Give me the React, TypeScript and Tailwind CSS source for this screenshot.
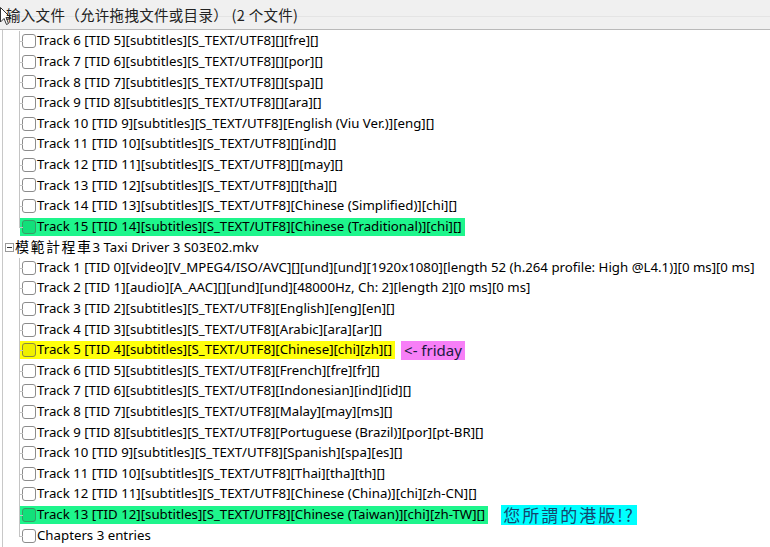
import React from "react";

type Row = {
  text: string;
  hl?: "green" | "yellow";
  note?: React.ReactNode;
};

const groupA: Row[] = [
  { text: "Track 6 [TID 5][subtitles][S_TEXT/UTF8][][fre][]" },
  { text: "Track 7 [TID 6][subtitles][S_TEXT/UTF8][][por][]" },
  { text: "Track 8 [TID 7][subtitles][S_TEXT/UTF8][][spa][]" },
  { text: "Track 9 [TID 8][subtitles][S_TEXT/UTF8][][ara][]" },
  { text: "Track 10 [TID 9][subtitles][S_TEXT/UTF8][English (Viu Ver.)][eng][]" },
  { text: "Track 11 [TID 10][subtitles][S_TEXT/UTF8][][ind][]" },
  { text: "Track 12 [TID 11][subtitles][S_TEXT/UTF8][][may][]" },
  { text: "Track 13 [TID 12][subtitles][S_TEXT/UTF8][][tha][]" },
  { text: "Track 14 [TID 13][subtitles][S_TEXT/UTF8][Chinese (Simplified)][chi][]" },
  { text: "Track 15 [TID 14][subtitles][S_TEXT/UTF8][Chinese (Traditional)][chi][]", hl: "green" },
];

const groupB: Row[] = [
  {
    text: "Track 1 [TID 0][video][V_MPEG4/ISO/AVC][][und][und][1920x1080][length 52 (h.264 profile: High @L4.1)][0 ms][0 ms]",
  },
  { text: "Track 2 [TID 1][audio][A_AAC][][und][und][48000Hz, Ch: 2][length 2][0 ms][0 ms]" },
  { text: "Track 3 [TID 2][subtitles][S_TEXT/UTF8][English][eng][en][]" },
  { text: "Track 4 [TID 3][subtitles][S_TEXT/UTF8][Arabic][ara][ar][]" },
  {
    text: "Track 5 [TID 4][subtitles][S_TEXT/UTF8][Chinese][chi][zh][]",
    hl: "yellow",
    note: (
      <span className="ml-[6px] flex h-[19px] items-center bg-[#f77ff7] px-[3px] text-[15px] text-[#1a1a40]">
        &lt;- friday
      </span>
    ),
  },
  { text: "Track 6 [TID 5][subtitles][S_TEXT/UTF8][French][fre][fr][]" },
  { text: "Track 7 [TID 6][subtitles][S_TEXT/UTF8][Indonesian][ind][id][]" },
  { text: "Track 8 [TID 7][subtitles][S_TEXT/UTF8][Malay][may][ms][]" },
  { text: "Track 9 [TID 8][subtitles][S_TEXT/UTF8][Portuguese (Brazil)][por][pt-BR][]" },
  { text: "Track 10 [TID 9][subtitles][S_TEXT/UTF8][Spanish][spa][es][]" },
  { text: "Track 11 [TID 10][subtitles][S_TEXT/UTF8][Thai][tha][th][]" },
  { text: "Track 12 [TID 11][subtitles][S_TEXT/UTF8][Chinese (China)][chi][zh-CN][]" },
  {
    text: "Track 13 [TID 12][subtitles][S_TEXT/UTF8][Chinese (Taiwan)][chi][zh-TW][]",
    hl: "green",
    note: (
      <span className="ml-[13px] flex h-[20px] items-center bg-[#00ffff] px-[2px] text-[17px] tracking-[2px] text-[#14466e] [font-family:'Noto_Sans_CJK_TC',sans-serif]">
        您所謂的港版!?
      </span>
    ),
  },
  { text: "Chapters 3 entries" },
];

const TrackRow = ({ row }: { row: Row }) => {
  const bg =
    row.hl === "green" ? "bg-[#1ef58c]" : row.hl === "yellow" ? "bg-[#ffff0a]" : "";
  const box =
    row.hl === "green"
      ? "bg-[#12e07a] border-[#3a9a66]"
      : row.hl === "yellow"
        ? "bg-[#f0f000] border-[#8a8a40]"
        : "bg-white border-[#8c8c8c]";
  return (
    <div className="relative flex h-[20.6px] items-center">
      <span className="absolute left-[16px] top-1/2 h-px w-[4px] bg-[#c4c4c4]" />
      <span className={`ml-[17px] flex h-[18px] items-center pr-[3px] ${bg}`}>
        <span className={`ml-[2px] h-[14px] w-[14px] rounded-[3px] border ${box}`} />
        <span className="ml-[1px] whitespace-nowrap">{row.text}</span>
      </span>
      {row.note}
    </div>
  );
};

const Group = ({ rows }: { rows: Row[] }) => (
  <div className="relative">
    <span className="absolute bottom-[10px] left-[16px] top-0 w-px bg-[#c4c4c4]" />
    {rows.map((r, i) => (
      <TrackRow key={i} row={r} />
    ))}
  </div>
);

export default function App() {
  return (
    <div className="h-[547px] w-[770px] overflow-hidden bg-white text-[13.25px] text-black [font-family:'Noto_Sans','Noto_Sans_CJK_SC',sans-serif]">
      <div className="relative flex h-[30px] items-center border-b border-[#b9b9b9] bg-[#f0f0f0] pl-[6px]">
        <span className="absolute left-0 right-0 top-[16px] h-px bg-[#e4e4e4]" />
        <svg className="absolute left-0 top-[7px]" width="11" height="20" viewBox="0 0 11 20">
          <path d="M0.5 0.5 L0.5 15 L4 11.5 L6.5 17.5 L8.5 16.5 L6 10.5 L10.5 10.5 Z" fill="white" stroke="#333" strokeWidth="1" />
        </svg>
        <span className="relative text-[14.5px] tracking-[0.3px] text-[#222] [font-family:'Noto_Sans_CJK_SC',sans-serif]">
          输入文件（允许拖拽文件或目录） (2 个文件)
        </span>
      </div>
      <div className="relative ml-[2px] h-[517px] border-l border-[#c8c8c8] pt-[1px]">
        <Group rows={groupA} />
        <div className="flex h-[20.6px] items-center">
          <span className="ml-[2px] flex h-[9px] w-[9px] items-center justify-center border border-[#9a9a9a] bg-white">
            <span className="h-px w-[5px] bg-[#333]" />
          </span>
          <span className="ml-[1px] whitespace-nowrap">
            <span className="text-[14px] tracking-[1.5px] [font-family:'Noto_Sans_CJK_TC',sans-serif]">模範計程車</span>3 Taxi Driver 3 S03E02.mkv
          </span>
        </div>
        <Group rows={groupB} />
      </div>
    </div>
  );
}
